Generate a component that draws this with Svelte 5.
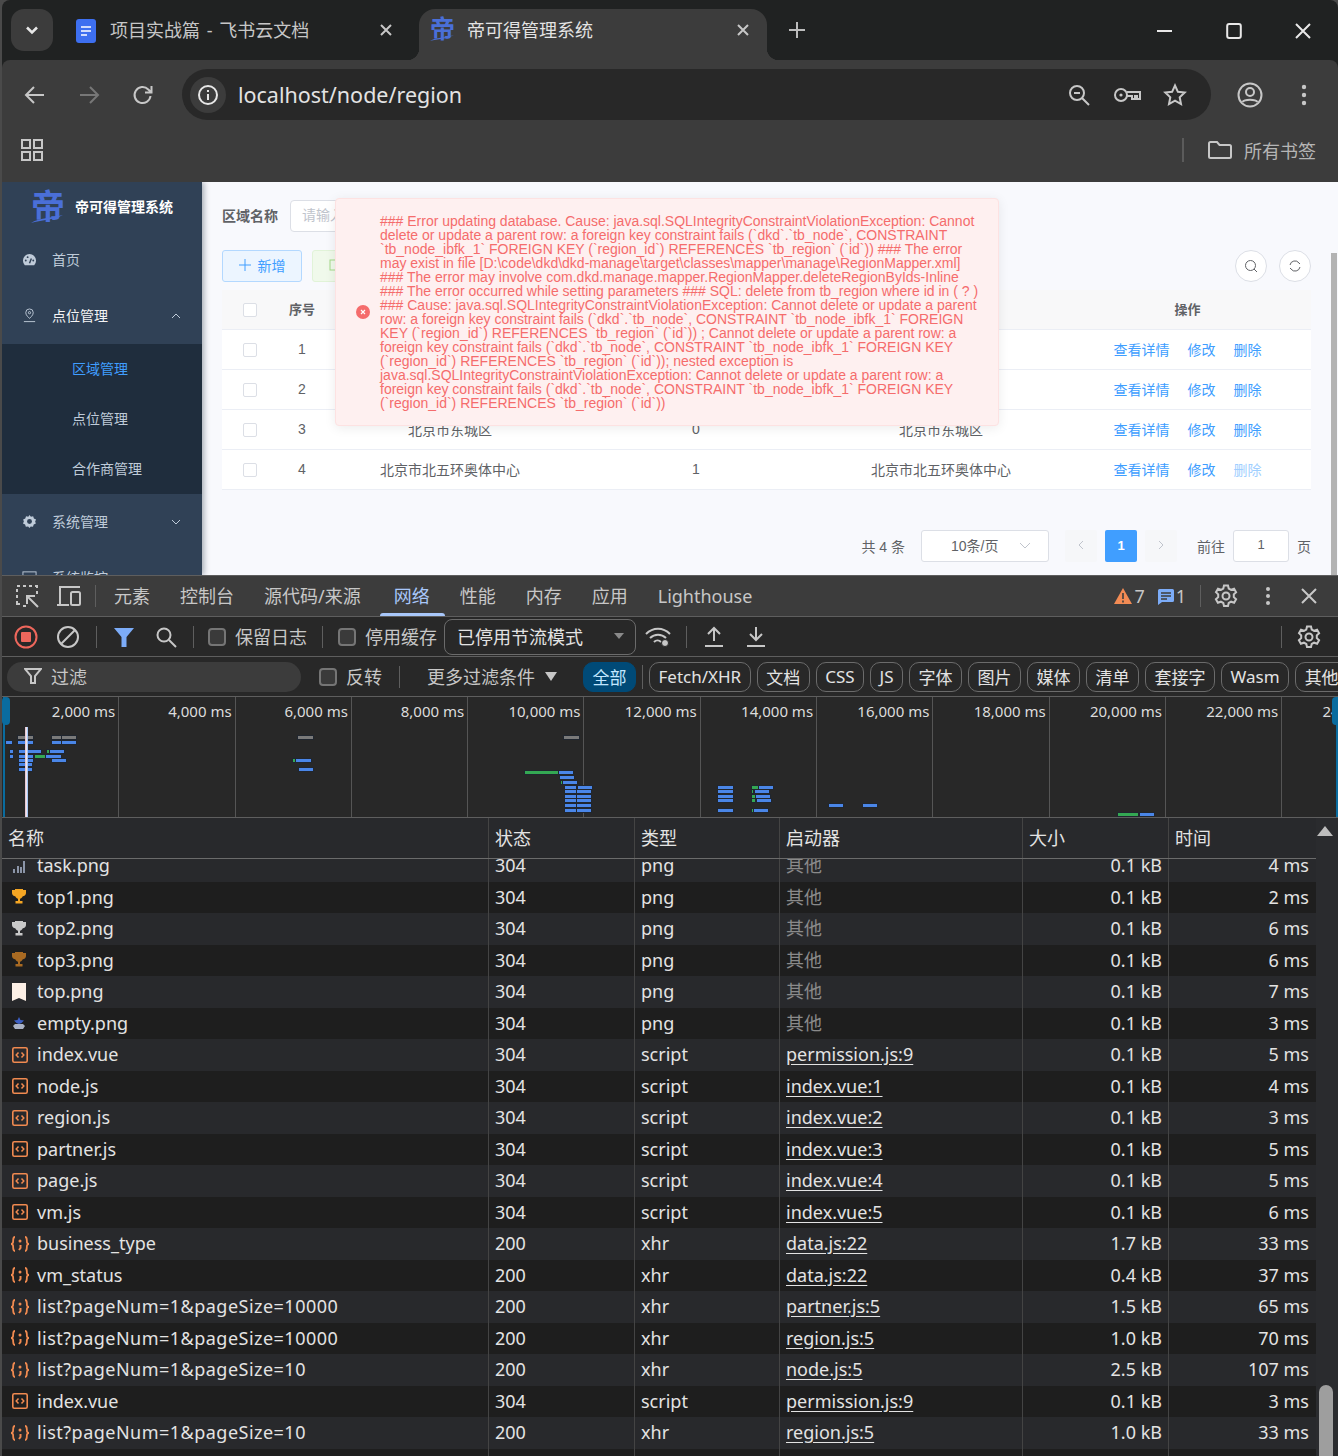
<script>
  const errLines = [
    "### Error updating database. Cause: java.sql.SQLIntegrityConstraintViolationException: Cannot",
    "delete or update a parent row: a foreign key constraint fails (`dkd`.`tb_node`, CONSTRAINT",
    "`tb_node_ibfk_1` FOREIGN KEY (`region_id`) REFERENCES `tb_region` (`id`)) ### The error",
    "may exist in file [D:\\code\\dkd\\dkd-manage\\target\\classes\\mapper\\manage\\RegionMapper.xml]",
    "### The error may involve com.dkd.manage.mapper.RegionMapper.deleteRegionByIds-Inline",
    "### The error occurred while setting parameters ### SQL: delete from tb_region where id in ( ? )",
    "### Cause: java.sql.SQLIntegrityConstraintViolationException: Cannot delete or update a parent",
    "row: a foreign key constraint fails (`dkd`.`tb_node`, CONSTRAINT `tb_node_ibfk_1` FOREIGN",
    "KEY (`region_id`) REFERENCES `tb_region` (`id`)) ; Cannot delete or update a parent row: a",
    "foreign key constraint fails (`dkd`.`tb_node`, CONSTRAINT `tb_node_ibfk_1` FOREIGN KEY",
    "(`region_id`) REFERENCES `tb_region` (`id`)); nested exception is",
    "java.sql.SQLIntegrityConstraintViolationException: Cannot delete or update a parent row: a",
    "foreign key constraint fails (`dkd`.`tb_node`, CONSTRAINT `tb_node_ibfk_1` FOREIGN KEY",
    "(`region_id`) REFERENCES `tb_region` (`id`))"
  ];
  const regions = [
    ["1", "", "", "", false],
    ["2", "", "", "", false],
    ["3", "北京市东城区", "0", "北京市东城区", false],
    ["4", "北京市北五环奥体中心", "1", "北京市北五环奥体中心", true]
  ];
  const dtTabs = ["元素", "控制台", "源代码/来源", "网络", "性能", "内存", "应用", "Lighthouse"];
  const chips = ["Fetch/XHR", "文档", "CSS", "JS", "字体", "图片", "媒体", "清单", "套接字", "Wasm", "其他"];
  const ticks = ["2,000", "4,000", "6,000", "8,000", "10,000", "12,000", "14,000", "16,000", "18,000", "20,000", "22,000", "24,000"];
  const G = "#7a7a7a", B = "#4a86e8", E = "#34a853";
  const bars = [
    [18,736,15,G],[52,736,9,G],[62,736,14,G],
    [6,741,6,B],[18,741,15,B],[52,741,9,B],[62,741,14,B],
    [10,750,3,B],[19,750,22,B],[47,750,2,E],[50,750,14,B],
    [10,755,3,B],[19,755,14,B],[35,755,10,E],[46,755,15,B],
    [19,759,14,B],[52,759,14,B],[19,763,13,B],[19,768,13,B],
    [298,736,15,G],[293,759,2,E],[296,759,15,B],[299,768,14,B],
    [564,736,15,G],[525,771,33,E],[559,771,14,B],[560,776,14,B],[561,781,2,E],[563,781,14,B],
    [565,786,11,B],[578,786,14,B],[565,790,11,B],[577,790,14,B],[565,795,11,B],[577,795,14,B],
    [565,799,11,B],[577,799,14,B],[565,804,11,B],[577,804,14,B],[565,809,11,B],[577,809,14,B],
    [718,786,15,B],[718,790,15,B],[718,795,15,B],[718,799,15,B],[718,809,15,B],
    [752,786,6,E],[759,786,14,B],[752,790,1,E],[755,790,14,B],[752,795,3,E],[756,795,14,B],
    [752,799,3,E],[757,799,14,B],[752,809,1,E],[754,809,14,B],
    [829,804,14,B],[863,804,14,B],
    [1118,813,20,E],[1140,813,14,B]
  ];
  const rows = [
    ["task.png","304","png","其他","0.1 kB","4 ms","task"],
    ["top1.png","304","png","其他","0.1 kB","2 ms","gold"],
    ["top2.png","304","png","其他","0.1 kB","6 ms","silver"],
    ["top3.png","304","png","其他","0.1 kB","6 ms","bronze"],
    ["top.png","304","png","其他","0.1 kB","7 ms","mark"],
    ["empty.png","304","png","其他","0.1 kB","3 ms","empty"],
    ["index.vue","304","script","permission.js:9","0.1 kB","5 ms","js"],
    ["node.js","304","script","index.vue:1","0.1 kB","4 ms","js"],
    ["region.js","304","script","index.vue:2","0.1 kB","3 ms","js"],
    ["partner.js","304","script","index.vue:3","0.1 kB","5 ms","js"],
    ["page.js","304","script","index.vue:4","0.1 kB","5 ms","js"],
    ["vm.js","304","script","index.vue:5","0.1 kB","6 ms","js"],
    ["business_type","200","xhr","data.js:22","1.7 kB","33 ms","xhr"],
    ["vm_status","200","xhr","data.js:22","0.4 kB","37 ms","xhr"],
    ["list?pageNum=1&pageSize=10000","200","xhr","partner.js:5","1.5 kB","65 ms","xhr"],
    ["list?pageNum=1&pageSize=10000","200","xhr","region.js:5","1.0 kB","70 ms","xhr"],
    ["list?pageNum=1&pageSize=10","200","xhr","node.js:5","2.5 kB","107 ms","xhr"],
    ["index.vue","304","script","permission.js:9","0.1 kB","3 ms","js"],
    ["list?pageNum=1&pageSize=10","200","xhr","region.js:5","1.0 kB","33 ms","xhr"],
    ["","","","","","",""]
  ];
  const trophy = { gold: "#f5a623", silver: "#c9c9c9", bronze: "#a86a22" };
</script>

<div class="root">
  <div class="chrome">
    <div class="tabstrip">
      <div class="tablist"><svg viewBox="0 0 24 24" width="20" height="20"><path d="M6 9l6 6 6-6" class="s3 w3"/></svg></div>
      <div class="tab first">
        <svg class="doc" viewBox="0 0 20 24" width="20" height="24"><rect x="0" y="0" width="20" height="24" rx="3" fill="#3d6ff0"/><path d="M5 8h10M5 12h10M5 16h6" stroke="#fff" stroke-width="1.6" fill="none"/></svg>
        <span class="tabtitle spaced">项目实战篇 - 飞书云文档</span>
        <svg class="tabx" viewBox="0 0 14 14" width="14" height="14"><path d="M2 2l10 10M12 2L2 12" class="s2 w2"/></svg>
      </div>
      <div class="tab active">
        <span class="fav">帝<svg viewBox="0 0 24 6" width="24" height="6"><path d="M0 6C6 2 15 3 24 0C17 4 8 4 0 6z" fill="#4a6fd8"/></svg></span>
        <span class="tabtitle">帝可得管理系统</span>
        <svg class="tabx" viewBox="0 0 14 14" width="14" height="14"><path d="M2 2l10 10M12 2L2 12" class="s2 w2"/></svg>
      </div>
      <svg class="plus" viewBox="0 0 18 18" width="18" height="18"><path d="M9 1v16M1 9h16" class="s1 w2"/></svg>
      <div class="winbtns">
        <svg viewBox="0 0 16 16" width="16" height="16"><path d="M0 8h15" class="s3 w2"/></svg>
        <svg viewBox="0 0 16 16" width="16" height="16"><rect x="1.2" y="1" width="13.6" height="14" rx="2" class="s3 w2"/></svg>
        <svg viewBox="0 0 16 16" width="16" height="16"><path d="M1 1l14 14M15 1L1 15" class="s3 w2"/></svg>
      </div>
    </div>
    <div class="toolbar">
      <div class="nav"><svg viewBox="0 0 24 24" width="24" height="24"><path d="M21 12H4M11 4l-8 8 8 8" class="s2 w2"/></svg></div>
      <div class="nav"><svg viewBox="0 0 24 24" width="24" height="24"><path d="M3 12h17M13 4l8 8-8 8" class="s4 w2"/></svg></div>
      <div class="nav"><svg viewBox="0 0 24 24" width="24" height="24"><path d="M19.5 13a8 8 0 1 1-2.2-6.5L20 9M20.5 3v6.5H14" class="s2 w2"/></svg></div>
      <div class="omni">
        <div class="info"><svg viewBox="0 0 22 22" width="22" height="22"><circle cx="11" cy="11" r="9" class="s3 w2"/><path d="M11 10v6M11 6v2" class="s3 w2"/></svg></div>
        <span class="url">localhost/node/region</span>
        <div class="omni-ic">
          <svg viewBox="0 0 24 24" width="24" height="24"><circle cx="10" cy="10" r="7" class="s2 w2"/><path d="M15 15l7 7M7 10h6" class="s2 w2"/></svg>
          <svg viewBox="0 0 28 24" width="28" height="24"><circle cx="8" cy="12" r="6" class="s2 w2"/><circle cx="8" cy="12" r="1.6" fill="#c7c7c7"/><path d="M14 9h13v7h-3v-3h-2v3h-3v-3h-5" class="s2 w2"/></svg>
          <svg viewBox="0 0 24 24" width="24" height="24"><path d="M12 2.5l2.9 6.3 6.8.8-5 4.7 1.3 6.8-6-3.4-6 3.4 1.3-6.8-5-4.7 6.8-.8z" class="s2 w2"/></svg>
        </div>
      </div>
      <div class="prof"><svg viewBox="0 0 26 26" width="26" height="26"><circle cx="13" cy="13" r="11.5" class="s2 w2"/><circle cx="13" cy="10" r="4" class="s2 w2"/><path d="M5.5 20c2-3 13-3 15 0" class="s2 w2"/></svg></div>
      <div class="dots"><svg viewBox="0 0 6 24" width="6" height="24"><circle cx="3" cy="4" r="2.2" fill="#c7c7c7"/><circle cx="3" cy="12" r="2.2" fill="#c7c7c7"/><circle cx="3" cy="20" r="2.2" fill="#c7c7c7"/></svg></div>
    </div>
    <div class="bookmarks">
      <svg class="apps" viewBox="0 0 22 22" width="22" height="22"><rect x="1" y="1" width="8" height="8" class="s2 w2"/><rect x="13" y="1" width="8" height="8" class="s2 w2"/><rect x="1" y="13" width="8" height="8" class="s2 w2"/><rect x="13" y="13" width="8" height="8" class="s2 w2"/></svg>
      <i class="bk-div"></i>
      <svg viewBox="0 0 24 18" width="24" height="18"><path d="M1 2.5a1.5 1.5 0 0 1 1.5-1.5H9l2.5 3h10A1.5 1.5 0 0 1 23 5.5v10a1.5 1.5 0 0 1-1.5 1.5h-19A1.5 1.5 0 0 1 1 15.5z" class="s2 w2"/></svg>
      <span class="bk-text">所有书签</span>
    </div>
  </div>

  <div class="page">
    <aside class="side">
      <div class="logo">
        <span class="logo-glyph">帝</span>
        <svg class="swoosh" viewBox="0 0 32 8" width="32" height="8"><path d="M0 8C8 3 20 3 32 0C22 5 10 5 0 8z" fill="#4a6fd8"/></svg>
        <span class="logo-title">帝可得管理系统</span>
      </div>
      <div class="mi"><svg viewBox="0 0 16 16" width="15" height="15"><path d="M3 14A7 7 0 1 1 13 14z" fill="#bfcbd9"/><path d="M8 12l2-5" stroke="#304156" stroke-width="1.5"/><circle cx="4" cy="9" r="1" fill="#304156"/><circle cx="12" cy="9" r="1" fill="#304156"/><circle cx="6" cy="5.5" r="1" fill="#304156"/></svg><span>首页</span></div>
      <div class="mi open"><svg viewBox="0 0 16 16" width="15" height="15"><path d="M8 1a4 4 0 0 1 4 4c0 3-4 6-4 6S4 8 4 5a4 4 0 0 1 4-4z" fill="none" stroke="#bfcbd9"/><circle cx="8" cy="5" r="1.2" fill="none" stroke="#bfcbd9"/><path d="M2 14.5h12" stroke="#bfcbd9"/></svg><span>点位管理</span><svg class="chev" viewBox="0 0 10 6" width="10" height="6"><path d="M1 5l4-4 4 4" fill="none" stroke="#bfcbd9"/></svg></div>
      <div class="sub">
        <div class="si on">区域管理</div>
        <div class="si">点位管理</div>
        <div class="si">合作商管理</div>
      </div>
      <div class="mi"><svg viewBox="0 0 16 16" width="15" height="15"><path d="M8 1l1.5 1.8 2.4-.3.8 2.3 2.3 1L14 8l.8 2.2-2.3 1-.8 2.3-2.4-.3L8 15l-1.5-1.8-2.4.3-.8-2.3-2.3-1L2 8l-.8-2.2 2.3-1 .8-2.3 2.4.3z" fill="#bfcbd9"/><circle cx="8" cy="8" r="2.6" fill="#304156"/></svg><span>系统管理</span><svg class="chev" viewBox="0 0 10 6" width="10" height="6"><path d="M1 1l4 4 4-4" fill="none" stroke="#bfcbd9"/></svg></div>
      <div class="mi"><svg viewBox="0 0 16 16" width="15" height="15"><rect x="1" y="2" width="14" height="11" fill="none" stroke="#bfcbd9"/></svg><span>系统监控</span></div>
    </aside>

    <main class="main">
      <div class="filter">
        <span class="flabel">区域名称</span>
        <div class="input">请输入</div>
      </div>
      <div class="actions">
        <div class="btn add"><svg viewBox="0 0 12 12" width="12" height="12"><path d="M6 0v12M0 6h12" stroke="#409eff" fill="none"/></svg>新增</div>
        <div class="btn edit"><svg viewBox="0 0 12 12" width="12" height="12"><rect x="1" y="1" width="10" height="10" fill="none" stroke="#a4da89"/></svg></div>
        <div class="circles">
          <div class="circle"><svg viewBox="0 0 14 14" width="14" height="14"><circle cx="6.5" cy="6.5" r="5" fill="none" stroke="#606266"/><path d="M10 10l3 3" stroke="#606266"/></svg></div>
          <div class="circle"><svg viewBox="0 0 14 14" width="14" height="14"><path d="M2 6a5 5 0 0 1 9-2l1 1M12 8a5 5 0 0 1-9 2L2 9" fill="none" stroke="#606266"/></svg></div>
        </div>
      </div>
      <div class="tbl">
        <div class="tr th">
          <div><i class="cb"></i></div><div>序号</div><div></div><div></div><div></div><div>操作</div>
        </div>
        {#each regions as r}
          <div class="tr">
            <div><i class="cb"></i></div><div>{r[0]}</div><div>{r[1]}</div><div>{r[2]}</div><div>{r[3]}</div>
            <div class="ops"><a href="#d">查看详情</a><a href="#e">修改</a><a href="#f" class:dis={r[4]}>删除</a></div>
          </div>
        {/each}
      </div>
      <div class="pager">
        <span class="total">共 4 条</span>
        <div class="psel">10条/页<svg viewBox="0 0 12 7" width="12" height="7"><path d="M1 1l5 5 5-5" fill="none" stroke="#c0c4cc"/></svg></div>
        <div class="pg off"><svg viewBox="0 0 6 10" width="6" height="10"><path d="M5 1L1 5l4 4" fill="none" stroke="#c0c4cc"/></svg></div>
        <div class="pg cur">1</div>
        <div class="pg off"><svg viewBox="0 0 6 10" width="6" height="10"><path d="M1 1l4 4-4 4" fill="none" stroke="#c0c4cc"/></svg></div>
        <span class="goto">前往</span>
        <div class="pinput">1</div>
        <span class="pu">页</span>
      </div>
      <div class="pscroll"></div>

      <div class="msg">
        <svg viewBox="0 0 14 14" width="14" height="14"><circle cx="7" cy="7" r="7" fill="#f56c6c"/><path d="M5 5l4 4M9 5l-4 4" stroke="#fff" stroke-width="1.2"/></svg>
        <div class="msgtext">
          {#each errLines as l}<div>{l}</div>{/each}
        </div>
      </div>
    </main>
  </div>

  <div class="dt">
    <div class="dt-top">
      <svg class="pick" viewBox="0 0 24 24" width="24" height="24"><path d="M2 2h3M8 2h3M14 2h3M20 2h2v2M2 5v3M2 11v3M2 17v3h3M8 22h3M22 7v3" stroke="#c7c7c7" stroke-width="2" fill="none"/><path d="M23 23L12 12M12 20v-8h8" class="s2 w2"/></svg>
      <svg class="dev" viewBox="0 0 26 24" width="26" height="24"><path d="M4 20V3h20M1 21h12" class="s2 w2"/><rect x="15" y="8" width="9" height="13" rx="1.5" class="s2 w2"/></svg>
      <i class="vd first-vd"></i>
      {#each dtTabs as t, i}<span class="dtab" class:sel={i===3}>{t}</span>{/each}
      <div class="dt-right">
        <svg viewBox="0 0 18 16" width="18" height="16"><path d="M9 0l9 16H0z" fill="#f28b54"/><path d="M9 5v6M9 12.5v2" stroke="#3c3c3c" stroke-width="1.6"/></svg>
        <span class="cnt">7</span>
        <svg class="ms" viewBox="0 0 16 16" width="16" height="16"><path d="M0 1.5A1.5 1.5 0 0 1 1.5 0h13A1.5 1.5 0 0 1 16 1.5v10a1.5 1.5 0 0 1-1.5 1.5H4l-4 3z" fill="#7cacf8"/><path d="M3 4h10M3 7h10M3 10h6" stroke="#3c3c3c" stroke-width="1.3"/></svg>
        <span class="cnt">1</span>
        <i class="vd dr-vd"></i>
        <svg class="gear" viewBox="0 0 24 24" width="24" height="24"><path d="M10 1.5h4l.7 3 2.4 1.3 3-1 2 3.4-2.3 2.2v2.700l2.300 2.200-2 3.400-3-1-2.400 1.300-.7 3h-4l-.7-3-2.400-1.300-3 1-2-3.400 2.300-2.200v-2.700L2 8.200l2-3.400 3 1L9.300 4.500z" class="s2 w2"/><circle cx="12" cy="12" r="3.500" class="s2 w2"/></svg>
        <svg class="dd" viewBox="0 0 6 20" width="6" height="20"><circle cx="3" cy="3" r="2" fill="#c7c7c7"/><circle cx="3" cy="10" r="2" fill="#c7c7c7"/><circle cx="3" cy="17" r="2" fill="#c7c7c7"/></svg>
        <svg class="xx" viewBox="0 0 16 16" width="16" height="16"><path d="M1 1l14 14M15 1L1 15" class="s2 w2"/></svg>
      </div>
    </div>

    <div class="dt-bar">
      <svg class="rec" viewBox="0 0 24 24" width="24" height="24"><circle cx="12" cy="12" r="10.500" fill="none" stroke="#ee675c" stroke-width="2"/><rect x="7" y="7" width="10" height="10" rx="1" fill="#ee675c"/></svg>
      <svg class="clr" viewBox="0 0 24 24" width="24" height="24"><circle cx="12" cy="12" r="10" class="s2 w2"/><path d="M5 19L19 5" class="s2 w2"/></svg>
      <i class="vd v1"></i>
      <svg class="fun" viewBox="0 0 20 20" width="20" height="20"><path d="M0 1h20l-7.500 9v10h-5V10z" fill="#7cacf8"/></svg>
      <svg class="sea" viewBox="0 0 22 22" width="22" height="22"><circle cx="9" cy="9" r="6.500" class="s2 w2"/><path d="M14 14l7 7" class="s2 w2"/></svg>
      <i class="vd v2"></i>
      <i class="dcb c1"></i><span class="lbl">保留日志</span>
      <i class="vd v3"></i>
      <i class="dcb c2"></i><span class="lbl">停用缓存</span>
      <div class="throttle"><span>已停用节流模式</span><i class="tri"></i></div>
      <svg class="wifi" viewBox="0 0 26 22" width="26" height="22"><path d="M1 8c7-7 17-7 24 0M5 12c4.500-4.500 11.500-4.500 16 0M9 16c2-2 5-2 7 0" class="s2 w2"/><circle cx="20" cy="17" r="3.500" fill="#c7c7c7" stroke="#282828"/></svg>
      <i class="vd v4"></i>
      <svg class="up" viewBox="0 0 20 22" width="20" height="22"><path d="M10 15V2M4 8l6-6 6 6M1 20h18" class="s2 w2"/></svg>
      <svg class="down" viewBox="0 0 20 22" width="20" height="22"><path d="M10 1v13M4 8l6 6 6-6M1 20h18" class="s2 w2"/></svg>
      <div class="bar-end">
        <i class="vd"></i>
        <svg class="gear2" viewBox="0 0 24 24" width="24" height="24"><path d="M10 1.500h4l.7 3 2.400 1.300 3-1 2 3.400-2.300 2.200v2.700l2.300 2.200-2 3.400-3-1-2.400 1.300-.7 3h-4l-.7-3-2.400-1.300-3 1-2-3.400 2.300-2.200v-2.700L2 8.200l2-3.400 3 1L9.300 4.500z" class="s2 w2"/><circle cx="12" cy="12" r="3.500" class="s2 w2"/></svg>
      </div>
    </div>

    <div class="dt-filter">
      <div class="fbox"><svg viewBox="0 0 18 18" width="18" height="18"><path d="M1 2h16l-6 7v7H7V9z" class="s2 w2"/></svg><span>过滤</span></div>
      <i class="dcb c3"></i><span class="lbl">反转</span>
      <i class="vd v5"></i>
      <span class="more">更多过滤条件</span><i class="tri big"></i>
      <span class="chip all">全部</span>
      <i class="vd v6"></i>
      {#each chips as c}<span class="chip">{c}</span>{/each}
    </div>

    <div class="timeline">
      <div class="ticks">
        {#each ticks as t}<div class="tick">{t} ms</div>{/each}
      </div>
      {#each bars as b}
        <i class="bar" style="left:{b[0]}px;top:{b[1]-697}px;width:{b[2]}px;background:{b[3]}"></i>
      {/each}
      <i class="mark"></i>
      <i class="hl"></i><i class="hr"></i>
      <i class="ll"></i><i class="lr"></i>
    </div>

    <div class="net">
      <div class="tablewrap">
        <div class="nrow nhead">
          <div>名称</div><div>状态</div><div>类型</div><div>启动器</div><div>大小</div><div>时间</div>
        </div>
        <div class="nbody">
          {#each rows as r}
            <div class="nrow">
              <div class="nm">
                {#if r[6]==="js"}
                  <svg viewBox="0 0 16 16" width="16" height="16"><rect x=".8" y=".8" width="14.400" height="14.400" rx="1.500" fill="none" stroke="#f08a50" stroke-width="1.600"/><path d="M6.500 5.500L4.200 8l2.300 2.500M9.500 5.500L11.800 8l-2.300 2.500" fill="none" stroke="#f08a50" stroke-width="1.500"/></svg>
                {:else if r[6]==="xhr"}
                  <svg class="xh" viewBox="0 0 20 16" width="20" height="16"><path d="M5 1C2.500 1 3.500 4 3 6.500 2.800 7.500 2 8 1 8c1 0 1.800.5 2 1.500C3.500 12 2.500 15 5 15M15 1c2.500 0 1.500 3 2 5.500.2 1 1 1.500 2 1.500-1 0-1.800.5-2 1.500-.5 2.500.5 5.500-2 5.500" fill="none" stroke="#f08a50" stroke-width="1.800"/><circle cx="10" cy="5" r="1.500" fill="#f08a50"/><path d="M10.500 9v3l-1.500 2" fill="none" stroke="#f08a50" stroke-width="2"/></svg>
                {:else if r[6]==="task"}
                  <svg viewBox="0 0 14 14" width="14" height="14"><path d="M1 10h2v4H1zM5 7h2v7H5zM8 8h2v6H8zM11 2h2v12h-2z" fill="#8b95a8"/></svg>
                {:else if r[6]==="mark"}
                  <svg viewBox="0 0 14 18" width="14" height="18"><path d="M0 0h14v18l-7-3-7 3z" fill="#fdf0e6"/></svg>
                {:else if r[6]==="empty"}
                  <svg viewBox="0 0 14 14" width="14" height="14"><path d="M3 8h8l2 2-2 3H3L1 10z" fill="#aab2c4"/><path d="M7 1l1.500 3L12 4.500 9.500 7 7 8 4.500 7 2 4.500 5.500 4z" fill="#3d5fc4"/></svg>
                {:else if r[6]}
                  <svg viewBox="0 0 14 16" width="14" height="16"><path d="M3 0h8v1h3v3c0 2-1.500 3-3.200 3.300C10 8.700 9 9.500 8 9.800V12h2.500v2.500h-7V12H6V9.800C5 9.500 4 8.700 3.200 7.300 1.500 7 0 6 0 4V1h3z" fill={trophy[r[6]]}/></svg>
                {/if}
                <span class="nmt" class:wide={r[0].startsWith("list")}>{r[0]}</span>
              </div>
              <div>{r[1]}</div>
              <div>{r[2]}</div>
              <div>{#if r[3]==="其他"}<span class="dim">其他</span>{:else if r[3]}<span class="lnk">{r[3]}</span>{/if}</div>
              <div class="num">{r[4]}</div>
              <div class="num">{r[5]}</div>
            </div>
          {/each}
        </div>
      </div>
      <div class="vscroll">
        <i class="sc-up"></i>
        <i class="sc-thumb"></i>
      </div>
    </div>
  </div>
</div>

<style>
  :global(body) { margin: 0; background: #3c3c3c; }
  .root {
    width: 1338px; height: 1456px; overflow: hidden; background: #4a4a4a;
    display: flex; flex-direction: column;
    font-family: "Noto Sans", "Noto Sans CJK SC", sans-serif;
  }
  .s1 { fill: none; stroke: #bdbdbd; }
  .s2 { fill: none; stroke: #c7c7c7; }
  .s3 { fill: none; stroke: #e8e8e8; }
  .s4 { fill: none; stroke: #777; }
  .w2 { stroke-width: 2; }
  .w3 { stroke-width: 3; }

  .chrome { margin-left: 2px; background: #202222; flex: none; border-radius: 8px 8px 0 0; }
  .tabstrip { height: 60px; display: flex; align-items: flex-end; padding-left: 9px; }
  .tablist {
    width: 42px; height: 42px; border-radius: 13px; background: #3c3c3c;
    display: flex; align-items: center; justify-content: center; align-self: flex-start; margin-top: 9px; flex: none;
  }
  .tab { height: 51px; display: flex; align-items: center; position: relative; box-sizing: border-box; color: #c7c7c7; font-size: 18px; flex: none; }
  .tab.first { width: 366px; padding-left: 23px; }
  .tab.first .doc { margin-right: 14px; flex: none; margin-top: -8px; }
  .tab .tabx { position: absolute; right: 17px; top: 14px; }
  .tab.first .tabx { right: 26px; }
  .tab.active { width: 348px; background: #3c3c3c; border-radius: 16px 16px 0 0; padding-left: 11px; color: #e3e3e3; }
  .tab.active::before, .tab.active::after {
    content: ""; position: absolute; bottom: 0; width: 12px; height: 12px;
  }
  .tab.active::before { left: -12px; background: radial-gradient(circle at 0 0, #202222 12px, #3c3c3c 12.500px); }
  .tab.active::after { right: -12px; background: radial-gradient(circle at 100% 0, #202222 12px, #3c3c3c 12.500px); }
  .tabtitle { white-space: nowrap; line-height: 40px; margin-top: -10px; }
  .tabtitle.spaced { word-spacing: 2px; }
  .fav { font-size: 25px; font-weight: 700; color: #4a6fd8; width: 37px; margin-top: -14px; line-height: 30px; position: relative; }
  .fav svg { position: absolute; left: 0; top: 22px; }
  .plus { align-self: flex-start; margin: 21px 0 0 21px; }
  .winbtns { margin-left: auto; display: flex; gap: 53px; padding-right: 27px; align-self: flex-start; margin-top: 23px; }
  .toolbar {
    height: 60px; background: #3c3c3c; display: flex; align-items: flex-start; padding: 9px 0 0 6px;
    box-sizing: border-box; border-radius: 8px 8px 0 0;
  }
  .nav { width: 54px; height: 51px; display: flex; align-items: center; justify-content: center; flex: none; }
  .omni {
    width: 1029px; height: 51px; margin-left: 12px; border-radius: 26px; background: #282828;
    display: flex; align-items: center; padding: 0 24px 0 8px; box-sizing: border-box; flex: none;
  }
  .info { width: 36px; height: 36px; border-radius: 50%; background: #3c3c3c; display: flex; align-items: center; justify-content: center; }
  .url { margin-left: 12px; font-size: 21.500px; color: #e3e3e3; white-space: nowrap; }
  .omni-ic { margin-left: auto; display: flex; align-items: center; gap: 22px; }
  .prof { margin-left: 26px; height: 51px; display: flex; align-items: center; }
  .dots { margin-left: 38px; height: 51px; display: flex; align-items: center; }
  .bookmarks {
    height: 62px; background: #3c3c3c; display: flex; align-items: center; padding: 0 22px 0 19px; box-sizing: border-box;
  }
  .apps { margin-right: auto; margin-top: -3px; }
  .bk-div { width: 2px; height: 24px; background: #5b5b5b; margin-right: 24px; margin-top: -3px; }
  .bookmarks svg:last-of-type { margin-top: -3px; }
  .bk-text { font-size: 18px; color: #b5b5b5; margin-left: 12px; margin-top: -2px; }

  .page {
    height: 393px; margin-left: 2px; display: flex; flex: none; overflow: hidden;
    font-family: "Liberation Sans", "Noto Sans CJK SC", sans-serif; font-size: 14px; color: #606266;
  }
  .side { width: 200px; flex: none; background: #304156; color: #bfcbd9; box-shadow: 2px 0 6px rgba(0, 21, 41, .35); position: relative; z-index: 1; }
  .logo { height: 50px; display: flex; align-items: center; padding-left: 29px; position: relative; }
  .logo-glyph { font-size: 34px; font-weight: 700; color: #4a6fd8; width: 44px; line-height: 36px; margin-top: -1px; }
  .swoosh { position: absolute; left: 29px; top: 33px; }
  .logo-title { color: #fff; font-weight: 700; font-size: 14px; margin-top: -3px; }
  .mi { height: 56px; display: flex; align-items: center; padding: 0 0 2px 20px; position: relative; box-sizing: border-box; }
  .mi svg:first-child { flex: none; margin-right: 15px; }
  .mi.open { color: #f4f4f5; }
  .chev { position: absolute; right: 21px; top: 25px; }
  .sub { background: #1f2d3d; }
  .si { height: 50px; line-height: 50px; padding-left: 70px; }
  .si.on { color: #409eff; }

  .main { flex: 1; min-width: 0; position: relative; background: #f8f9fd; padding: 18px 27px 0 20px; box-sizing: border-box; }
  .filter { height: 32px; display: flex; align-items: center; }
  .flabel { font-weight: 700; width: 68px; flex: none; margin-top: -2px; }
  .input { width: 240px; height: 32px; box-sizing: border-box; border: 1px solid #dcdfe6; border-radius: 4px; background: #fff; color: #c0c4cc; line-height: 28px; padding-left: 11px; }
  .actions { height: 32px; display: flex; align-items: center; margin-top: 18px; }
  .btn { height: 32px; box-sizing: border-box; border-radius: 3px; display: flex; align-items: center; justify-content: center; gap: 7px; padding-bottom: 2px; }
  .add { width: 80px; background: #ecf5ff; border: 1px solid #b3d8ff; color: #409eff; }
  .edit { width: 80px; background: #f0f9eb; border: 1px solid #e1f3d8; color: #a4da89; margin-left: 10px; justify-content: flex-start; padding-left: 16px; }
  .circles { margin-left: auto; display: flex; gap: 12px; }
  .circle { width: 32px; height: 32px; box-sizing: border-box; border: 1px solid #dcdfe6; border-radius: 50%; background: #fff; display: flex; align-items: center; justify-content: center; }
  .tbl { margin-top: 8px; background: #fff; }
  .tr { display: grid; grid-template-columns: 56px 48px 248px 244px 246px 247px; height: 40px; box-sizing: border-box; border-bottom: 1px solid #ebeef5; align-items: center; text-align: center; padding-bottom: 2px; }
  .tr.th { background: #f8f8f9; font-weight: 700; font-size: 13px; }
  .cb { display: block; width: 14px; height: 14px; border: 1px solid #dcdfe6; border-radius: 2px; background: #fff; margin: 2px 0 0 21px; box-sizing: border-box; }
  .ops { display: flex; gap: 18px; justify-content: center; }
  .ops a { color: #409eff; text-decoration: none; }
  .ops a.dis { color: #a0cfff; }
  .pager { display: flex; align-items: center; justify-content: flex-end; margin-top: 40px; height: 32px; font-size: 14px; }
  .total { margin-right: 16px; margin-top: -1px; }
  .psel { width: 128px; height: 32px; box-sizing: border-box; border: 1px solid #dcdfe6; border-radius: 3px; background: #fff; display: flex; align-items: center; padding: 0 17px 2px 29px; justify-content: space-between; margin-right: 16px; }
  .pg { width: 32px; height: 32px; border-radius: 2px; display: flex; align-items: center; justify-content: center; background: #f4f4f5; margin-right: 8px; font-size: 13px; padding-bottom: 2px; box-sizing: border-box; }
  .pg.cur { background: #409eff; color: #fff; font-weight: 700; }
  .pg.off:nth-of-type(n) { background: #f6f7f9; }
  .goto { margin-left: 12px; margin-right: 8px; margin-top: -1px; }
  .pinput { width: 56px; height: 32px; box-sizing: border-box; border: 1px solid #dcdfe6; border-radius: 3px; background: #fff; text-align: center; line-height: 28px; font-size: 13px; }
  .pu { margin-left: 8px; margin-top: -1px; }
  .pscroll { position: absolute; right: 1px; top: 71px; width: 6px; bottom: 0; background: #b3b3b3; }
  .msg {
    position: absolute; left: 133px; top: 16px; width: 664px; height: 228px; box-sizing: border-box;
    background: #fef0f0; border: 1px solid #fde2e2; border-radius: 4px; box-shadow: 0 2px 12px rgba(0, 0, 0, .08);
    display: flex; align-items: center; padding: 15px 0 15px 20px; color: #f56c6c;
  }
  .msg svg { flex: none; margin-right: 10px; }
  .msgtext { font-size: 14px; line-height: 14px; white-space: nowrap; }

  .dt { flex: 1; min-height: 0; display: flex; flex-direction: column; margin-left: 2px; color: #e3e3e3; border-top: 1px solid #5e5e5e; background: #282828; }
  .vd { display: block; width: 1px; height: 22px; background: #5e5e5e; flex: none; }
  .dt-top { height: 41px; box-sizing: border-box; flex: none; background: #3c3c3c; border-bottom: 1px solid #5e5e5e; display: flex; align-items: center; position: relative; font-size: 18px; color: #c7c7c7; }
  .pick { margin-left: 13px; }
  .dev { margin-left: 17px; }
  .first-vd { margin-left: 13px; }
  .dtab { margin-left: 30px; white-space: nowrap; position: relative; line-height: 40px; }
  .dtab:first-of-type { margin-left: 18px; }
  .dtab.sel { color: #a8c7fa; margin-left: 33px; }
  .dtab.sel::after { content: ""; position: absolute; left: -14px; right: -15px; bottom: 0; height: 3px; background: #a8c7fa; border-radius: 3px 3px 0 0; }
  .dt-right { margin-left: auto; display: flex; align-items: center; padding-right: 21px; }
  .cnt { margin-left: 2px; }
  .ms { margin-left: 13px; margin-top: 2px; }
  .dr-vd { margin-left: 14px; }
  .gear { margin-left: 13px; }
  .dd { margin-left: 27px; }
  .xx { margin-left: 30px; }

  .dt-bar { height: 40px; box-sizing: border-box; flex: none; border-bottom: 1px solid #5e5e5e; display: flex; align-items: center; font-size: 18px; color: #c7c7c7; }
  .rec { margin-left: 12px; }
  .clr { margin-left: 18px; }
  .v1 { margin-left: 16px; }
  .fun { margin-left: 17px; }
  .sea { margin-left: 21px; }
  .v2 { margin-left: 16px; }
  .dcb { display: block; width: 18px; height: 18px; box-sizing: border-box; border: 2px solid #757575; border-radius: 4px; background: #3a3a3a; flex: none; }
  .lbl { margin-left: 9px; white-space: nowrap; margin-top: -2px; }
  .c1 { margin-left: 14px; }
  .v3 { margin-left: 15px; }
  .c2 { margin-left: 15px; }
  .throttle { margin-left: 7px; width: 192px; height: 36px; box-sizing: border-box; border: 1px solid #6b6b6b; border-radius: 8px; display: flex; align-items: center; justify-content: space-between; padding: 0 11px 2px 12px; color: #e3e3e3; }
  .tri { display: block; width: 0; height: 0; border-left: 5px solid transparent; border-right: 5px solid transparent; border-top: 6px solid #8a8a8a; flex: none; }
  .tri.big { border-left-width: 6px; border-right-width: 6px; border-top: 9px solid #c7c7c7; margin-left: 10px; }
  .wifi { margin-left: 9px; }
  .v4 { margin-left: 15px; }
  .up { margin-left: 17px; }
  .down { margin-left: 22px; }
  .bar-end { margin-left: auto; display: flex; align-items: center; gap: 15px; padding-right: 17px; }

  .dt-filter { height: 40px; box-sizing: border-box; flex: none; border-bottom: 1px solid #5e5e5e; display: flex; align-items: center; font-size: 18px; color: #c7c7c7; }
  .fbox { width: 294px; height: 30px; margin-left: 5px; border-radius: 15px; background: #3c3c3c; display: flex; align-items: center; padding: 0 0 2px 17px; box-sizing: border-box; gap: 9px; flex: none; }
  .c3 { margin-left: 18px; }
  .v5 { margin-left: 17px; }
  .more { margin-left: 27px; white-space: nowrap; margin-top: -2px; }
  .chip { height: 30px; box-sizing: border-box; border: 1px solid #6b6b6b; border-radius: 10px; padding: 0 8.500px; display: flex; align-items: center; color: #e3e3e3; margin-left: 6px; white-space: nowrap; flex: none; font-size: 17px; }
  .chip.all { background: #004a77; border-color: #004a77; color: #c2e7ff; margin-left: 26px; }
  .v6 { margin-left: 6px; height: 24px; }

  .timeline { height: 121px; box-sizing: border-box; flex: none; position: relative; border-bottom: 1px solid #5e5e5e; overflow: hidden; }
  .ticks { display: flex; height: 100%; padding-left: 1px; }
  .tick { width: 116.300px; flex: none; box-sizing: border-box; border-right: 1.500px solid #555; text-align: right; padding: 4px 3px 0 0; font-size: 15px; line-height: 20px; white-space: nowrap; color: #dcdcdc; }
  .bar { position: absolute; height: 3px; margin-left: -2px; box-shadow: 0 0 0 1px #20262f; }
  .mark { position: absolute; left: 23px; top: 30px; bottom: 0; width: 3px; background: linear-gradient(90deg, #e8b4c4, #e8e8f0, #8ab4f8); }
  .hl, .hr { position: absolute; top: 0; width: 8px; height: 28px; background: #0a6c9f; border-radius: 4px; }
  .hl { left: 0; }
  .hr { right: -2px; }
  .ll, .lr { position: absolute; top: 0; bottom: 0; width: 2px; background: #0a6c9f; }
  .ll { left: 1px; }
  .lr { right: 0; }

  .net { flex: 1; min-height: 0; display: flex; overflow: hidden; }
  .tablewrap { width: 1314px; flex: none; display: flex; flex-direction: column; }
  .nrow { display: grid; grid-template-columns: 487px 146px 145px 243px 146px 147px; height: 31.500px; font-size: 18px; align-items: stretch; }
  .nrow:nth-child(odd) { background: #28292c; }
  .nrow:nth-child(even) { background: #1e1e1e; }
  .nrow > div { display: flex; align-items: center; padding-left: 6px; border-right: 1px solid #444; box-sizing: border-box; white-space: nowrap; overflow: hidden; line-height: 31px; }
  .nrow > div:last-child { border-right: 0; padding-right: 7px; }
  .nrow .num { justify-content: flex-end; padding-right: 6px; padding-left: 0; }
  .nhead { height: 41px; flex: none; box-sizing: border-box; border-bottom: 1px solid #6b6b6b; background: #28292c !important; }
  .nbody { flex: 1; min-height: 0; overflow: hidden; }
  .nbody .nrow:first-child { margin-top: -9px; }
  .nrow > .nm { padding-left: 0; position: relative; }
  .nm svg { position: absolute; left: 10px; top: 50%; transform: translateY(-50%); }
  .nm svg.xh { left: 8px; }
  .nmt { margin-left: 35px; }
  .nmt.wide { letter-spacing: .48px; }
  .dim { color: #8a8a8a; }
  .lnk { text-decoration: underline; text-underline-offset: 3px; }
  .vscroll { flex: 1; background: #2a2b2e; position: relative; }
  .sc-up { position: absolute; left: 1px; top: 8px; width: 0; height: 0; border-left: 8px solid transparent; border-right: 8px solid transparent; border-bottom: 10px solid #bdbdbd; }
  .sc-thumb { position: absolute; left: 3px; bottom: 0; width: 14px; height: 71px; background: #9e9e9e; border-radius: 7px 7px 0 0; }
</style>
